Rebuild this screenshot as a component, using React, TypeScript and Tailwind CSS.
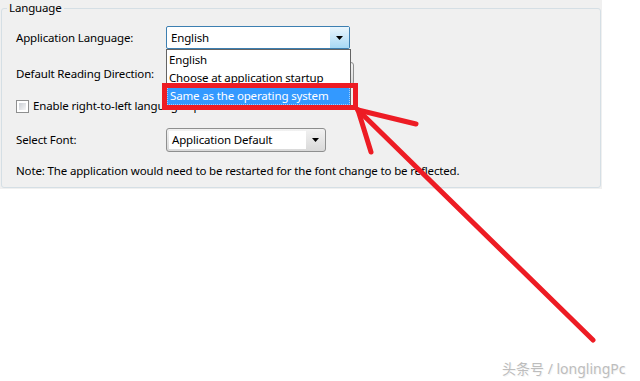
const font = { fontFamily: '"Noto Sans", "Noto Sans CJK SC", sans-serif' };

function Arrow({ open = false }: { open?: boolean }) {
  return (
    <div
      className={`w-[19px] h-full flex items-center justify-center ${
        open ? "bg-gradient-to-b from-[#eaf6fd] to-[#a7d9f5]" : ""
      }`}
    >
      <svg width="7" height="4" viewBox="0 0 7 4">
        <path d="M0 0h7L3.5 4z" fill="#000" />
      </svg>
    </div>
  );
}

export default function App() {
  return (
    <div
      className="relative w-[640px] h-[381px] bg-white text-[11.5px] tracking-[-0.15px] text-black"
      style={font}
    >
      <div className="w-[602px] h-[189px] bg-[#f0f0f0] pt-[8px] pl-[1px]">
        <div className="relative w-[600px] h-[180px] border border-[#d5dfe5] rounded-[3px]">
          <span className="absolute left-[5px] top-[-10px] px-[2px] bg-[#f0f0f0] leading-[18px]">
            Language
          </span>

          <div className="flex flex-col pl-[14px]">
            <div className="flex items-center h-[23px] mt-[17px]">
              <span className="w-[150px]">Application Language:</span>
              <div className="flex w-[184px] h-[23px] border border-[#3c7fb1] rounded-[2px] bg-white">
                <span className="flex-1 pl-[4px] leading-[21px]">English</span>
                <Arrow open />
              </div>
            </div>

            <div className="flex items-center h-[23px] mt-[13px]">
              <span className="w-[150px]">Default Reading Direction:</span>
              <div className="flex w-[188px] h-[23px] border border-[#8e8f8f] rounded-[3px] bg-gradient-to-b from-[#f2f2f2] to-[#dcdcdc]" />
            </div>

            <div className="flex items-center h-[18px] mt-[12px]">
              <div className="w-[13px] h-[13px] border border-[#8e8f8f] bg-white p-[2px] mr-[4px]">
                <div className="w-full h-full bg-gradient-to-br from-[#cbcfd5] to-[#f6f6f6]" />
              </div>
              <span>Enable right-to-left language options</span>
            </div>

            <div className="flex items-center h-[24px] mt-[13px]">
              <span className="w-[150px]">Select Font:</span>
              <div className="flex w-[160px] h-[24px] border border-[#8e8f8f] rounded-[3px] bg-gradient-to-b from-[#f2f2f2] to-[#d9d9d9] p-[2px] pr-0">
                <span className="flex-1 bg-white pl-[3px] leading-[18px]">Application Default</span>
                <Arrow />
              </div>
            </div>

            <div className="flex items-center h-[18px] mt-[10px]">
              Note: The application would need to be restarted for the font change to be reflected.
            </div>
          </div>
        </div>
      </div>

      {/* open dropdown list */}
      <div className="absolute left-[166px] top-[49px] w-[185px] h-[58px] border border-[#646464] bg-white flex flex-col pt-[1px]">
        <span className="h-[18px] leading-[18px] pl-[2px]">English</span>
        <span className="h-[18px] leading-[18px] pl-[2px]">Choose at application startup</span>
        <span className="h-[18px] leading-[16px] pl-[2px] bg-[#3399ff] text-white border border-dotted border-[#9fcfff]">
          Same as the operating system
        </span>
      </div>

      {/* red highlight box */}
      <div className="absolute left-[162px] top-[83px] w-[196px] h-[27px] border-[5px] border-[#ed1c24]" />

      {/* hand-drawn arrow */}
      <svg className="absolute left-0 top-0" width="640" height="381" viewBox="0 0 640 381">
        <g stroke="#ed1c24" strokeWidth="5" strokeLinecap="round" fill="none">
          <path d="M593 340L358 110" />
          <path d="M358 110L416 124" />
          <path d="M358 110L371 152" />
        </g>
      </svg>

      <span className="absolute left-[502px] top-[358px] text-[14px] tracking-normal text-[#bdbdbd] [text-shadow:1px_1px_0_#f4f4f4]">
        头条号 / longlingPc
      </span>
    </div>
  );
}
